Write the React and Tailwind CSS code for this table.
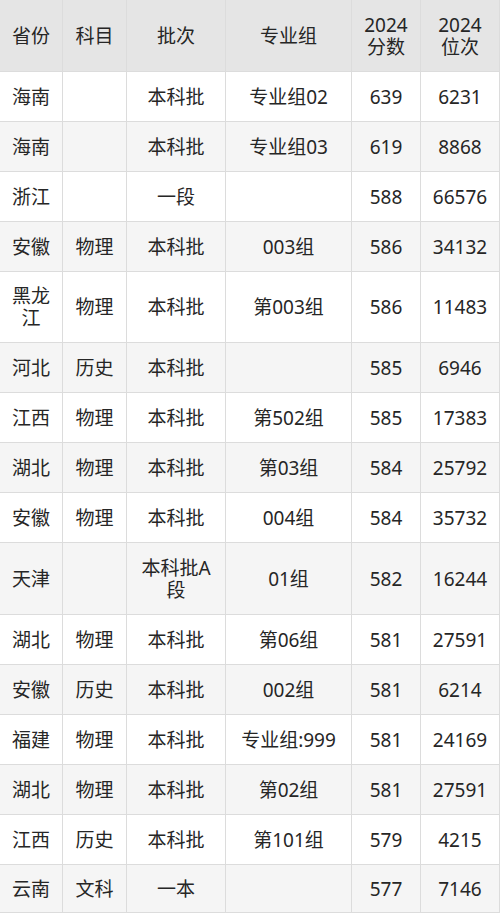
import React from 'react';

const columns = ['省份', '科目', '批次', '专业组', '2024分数', '2024位次'];

const rows = [
  { province: '海南', subject: '', batch: '本科批', group: '专业组02', score: '639', rank: '6231' },
  { province: '海南', subject: '', batch: '本科批', group: '专业组03', score: '619', rank: '8868' },
  { province: '浙江', subject: '', batch: '一段', group: '', score: '588', rank: '66576' },
  { province: '安徽', subject: '物理', batch: '本科批', group: '003组', score: '586', rank: '34132' },
  { province: '黑龙江', subject: '物理', batch: '本科批', group: '第003组', score: '586', rank: '11483', h: 'h-[71px]' },
  { province: '河北', subject: '历史', batch: '本科批', group: '', score: '585', rank: '6946' },
  { province: '江西', subject: '物理', batch: '本科批', group: '第502组', score: '585', rank: '17383' },
  { province: '湖北', subject: '物理', batch: '本科批', group: '第03组', score: '584', rank: '25792' },
  { province: '安徽', subject: '物理', batch: '本科批', group: '004组', score: '584', rank: '35732' },
  { province: '天津', subject: '', batch: '本科批A段', group: '01组', score: '582', rank: '16244', h: 'h-[72px]' },
  { province: '湖北', subject: '物理', batch: '本科批', group: '第06组', score: '581', rank: '27591' },
  { province: '安徽', subject: '历史', batch: '本科批', group: '002组', score: '581', rank: '6214' },
  { province: '福建', subject: '物理', batch: '本科批', group: '专业组:999', score: '581', rank: '24169' },
  { province: '湖北', subject: '物理', batch: '本科批', group: '第02组', score: '581', rank: '27591' },
  { province: '江西', subject: '历史', batch: '本科批', group: '第101组', score: '579', rank: '4215' },
  { province: '云南', subject: '文科', batch: '一本', group: '', score: '577', rank: '7146', h: 'h-[48px]' },
];

const gridCols = 'grid grid-cols-[63px_64px_99px_126px_69px_79px]';

const Cell = ({ children, narrow }) => (
  <div className="flex items-center justify-center border-b border-r border-[#dcdcdc] px-2 text-center leading-[22px]">
    <span className={narrow ? 'max-w-[50px]' : ''}>{children}</span>
  </div>
);

const App = () => {
  return (
    <div
      className="w-[500px] h-[916px] bg-white text-[19px] text-[#262626] overflow-hidden"
      style={{ fontFamily: '"Noto Sans", "Noto Sans CJK SC", sans-serif' }}
    >
      {/* Header */}
      <div className={`${gridCols} h-[72px] bg-[#e5e5e5]`}>
        {columns.map((col, i) => (
          <Cell key={i} narrow={i >= 4}>
            {col}
          </Cell>
        ))}
      </div>

      {/* Body */}
      {rows.map((row, index) => (
        <div
          key={index}
          className={`${gridCols} ${row.h || 'h-[50px]'} ${index % 2 === 1 ? 'bg-[#f5f5f5]' : 'bg-white'}`}
        >
          <Cell>{row.province}</Cell>
          <Cell>{row.subject}</Cell>
          <Cell>{row.batch}</Cell>
          <Cell>{row.group}</Cell>
          <Cell>{row.score}</Cell>
          <Cell>{row.rank}</Cell>
        </div>
      ))}
    </div>
  );
};

export default App;
